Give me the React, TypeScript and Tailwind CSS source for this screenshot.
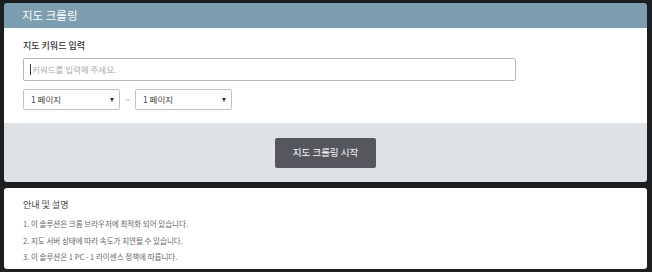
import React from "react";

function Select() {
  return (
    <div className="w-[97px] h-[21px] border border-[#c0c0c0] rounded-[2px] flex items-center justify-between pl-[7px] pr-[5px]">
      <span className="text-[8.5px] text-[#444]">1 페이지</span>
      <span className="w-0 h-0 border-l-[2.5px] border-r-[2.5px] border-t-[4px] border-l-transparent border-r-transparent border-t-[#333]" />
    </div>
  );
}

export default function App() {
  const font = { fontFamily: '"Noto Sans CJK KR", "Noto Sans", sans-serif' };
  return (
    <div className="w-[652px] h-[272px] bg-[#1c1e1f] pl-[4px] pr-[5px] pt-[3px] flex flex-col gap-[6px]" style={font}>
      <div className="rounded-[3px] overflow-hidden flex flex-col">
        <div className="h-[25px] bg-[#7d9db1] flex items-center pl-[18px] text-[11.5px] text-white">
          지도 크롤링
        </div>
        <div className="bg-white h-[95px] pl-[19px] pt-[11px] flex flex-col">
          <div className="text-[9px] leading-[13px] font-medium text-[#333]">지도 키워드 입력</div>
          <div className="mt-[6px] w-[493px] h-[23px] border border-[#b5b5b5] rounded-[2px] flex items-center pl-[6px]">
            <div className="w-px h-[11px] bg-[#333]" />
            <span className="text-[8.5px] text-[#aaa] ml-[1px]">키워드를 입력해 주세요.</span>
          </div>
          <div className="mt-[8px] flex items-center">
            <Select />
            <span className="w-[15px] text-center text-[8px] text-[#999]">~</span>
            <Select />
          </div>
        </div>
        <div className="bg-[#dfe2e4] h-[59px] flex items-center justify-center">
          <div className="w-[101px] h-[30px] bg-[#55565e] rounded-[2px] flex items-center justify-center text-[9.5px] text-white">
            지도 크롤링 시작
          </div>
        </div>
      </div>
      <div className="bg-white rounded-[3px] h-[81px] pl-[19px] pt-[10px] flex flex-col">
        <div className="text-[9px] leading-[13px] text-[#444]">안내 및 설명</div>
        <div className="mt-[5px] flex flex-col text-[7.5px] leading-[16.5px] text-[#666]">
          <span>1. 이 솔루션은 크롬 브라우저에 최적화 되어 있습니다.</span>
          <span>2. 지도 서버 상태에 따라 속도가 지연될 수 있습니다.</span>
          <span>3. 이 솔루션은 1 PC - 1 라이센스 정책에 따릅니다.</span>
        </div>
      </div>
    </div>
  );
}
